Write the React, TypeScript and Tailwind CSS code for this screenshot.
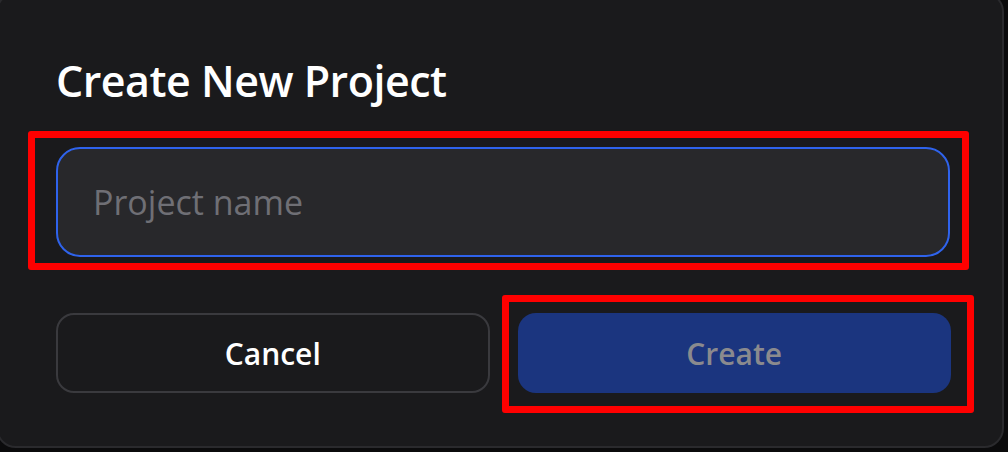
import React, { useState } from 'react';

const App: React.FC = () => {
  const [name, setName] = useState('');

  return (
    <div className="relative w-[1008px] h-[452px] overflow-hidden bg-[#0b0b0c] font-['Open_Sans','Noto_Sans',sans-serif]">
      <div className="ml-[-4px] mt-[-8px] w-[1008px] h-[456px] rounded-[20px] border-2 border-[#2a2a2d] bg-[#1a1a1c] pl-[58px] pt-[60px]">
        <h2 className="h-[54px] text-[43px] leading-[54px] font-semibold text-white tracking-[-0.5px]">Create New Project</h2>

        <input
          value={name}
          onChange={e => setName(e.target.value)}
          placeholder="Project name"
          className="mt-[39px] block w-[894px] h-[110px] rounded-[24px] border-2 border-[#2f63ec] bg-[#28282b] px-[35px] text-[34px] text-white placeholder:text-[#6f6f75] outline-none"
        />

        <div className="mt-[56px] grid w-[895px] grid-cols-2 gap-[28px]">
          <button className="h-[80px] rounded-[18px] border-2 border-[#3a3a3e] bg-transparent text-[30px] font-semibold text-white">
            Cancel
          </button>
          <button disabled={!name} className="h-[80px] rounded-[18px] bg-[#1b357f] text-[30px] font-semibold text-[#8a8a8e]">
            Create
          </button>
        </div>
      </div>

      {/* annotation frames */}
      <div className="pointer-events-none absolute left-[28px] top-[131px] w-[941px] h-[139px] rounded-[3px] border-[7px] border-[#ff0000]" />
      <div className="pointer-events-none absolute left-[502px] top-[295px] w-[472px] h-[118px] rounded-[3px] border-[7px] border-[#ff0000]" />
    </div>
  );
};

export default App;
